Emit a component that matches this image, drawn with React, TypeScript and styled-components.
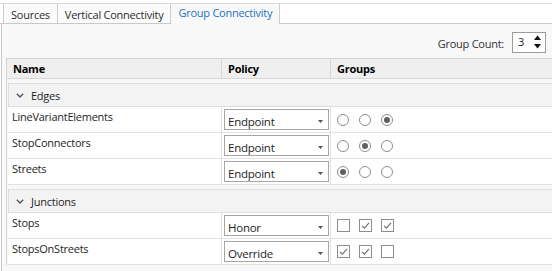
import React from 'react';
import styled, { createGlobalStyle, css } from 'styled-components';

type Kind = 'radio' | 'check';

interface ItemRow {
  name: string;
  policy: string;
  kind: Kind;
  values: boolean[];
}

interface Group {
  title: string;
  rows: ItemRow[];
}

const groups: Group[] = [
  {
    title: 'Edges',
    rows: [
      { name: 'LineVariantElements', policy: 'Endpoint', kind: 'radio', values: [false, false, true] },
      { name: 'StopConnectors', policy: 'Endpoint', kind: 'radio', values: [false, true, false] },
      { name: 'Streets', policy: 'Endpoint', kind: 'radio', values: [true, false, false] },
    ],
  },
  {
    title: 'Junctions',
    rows: [
      { name: 'Stops', policy: 'Honor', kind: 'check', values: [false, true, true] },
      { name: 'StopsOnStreets', policy: 'Override', kind: 'check', values: [true, true, false] },
    ],
  },
];

const GlobalStyle = createGlobalStyle`
  html, body {
    margin: 0;
    padding: 0;
    background: #ffffff;
  }
  body {
    font-family: "Open Sans", "Noto Sans", sans-serif;
    font-size: 11px;
    letter-spacing: -0.25px;
    color: #1e1e1e;
    overflow: hidden;
  }
`;

const Window = styled.div`
  width: 552px;
  height: 271px;
  display: flex;
  flex-direction: column;
  overflow: hidden;
`;

const TabBar = styled.div`
  margin-top: 3px;
  height: 21px;
  box-sizing: border-box;
  border-top: 1px solid #dcdcdc;
  border-bottom: 1px solid #c9c9c9;
  display: flex;
  padding-left: 3px;
  background: #ffffff;
`;

const Tab = styled.div<{ $active?: boolean }>`
  box-sizing: border-box;
  height: 19px;
  padding: 1px 7px 0 7px;
  line-height: 19px;
  border-right: 1px solid #cdcdcd;
  background: #fbfbfb;
  color: #2b2b2b;
  white-space: nowrap;

  &:first-child {
    border-left: 1px solid #cdcdcd;
  }

  ${({ $active }) =>
    $active &&
    css`
      height: 20px;
      margin-bottom: -1px;
      padding-top: 0;
      line-height: 17px;
      background: #f8f8f8;
      color: #1a72c4;
    `}
`;

const Panel = styled.div`
  flex: 1;
  margin-left: 1px;
  border-left: 1px solid #c9c9c9;
  background: #f8f8f8;
  display: flex;
  flex-direction: column;
  overflow: hidden;
`;

const Toolbar = styled.div`
  height: 34px;
  box-sizing: border-box;
  display: flex;
  justify-content: flex-end;
  align-items: flex-start;
  gap: 8px;
  padding: 8px 6px 0 0;
`;

const CountLabel = styled.span`
  line-height: 21px;
  padding-top: 1px;
  color: #333333;
`;

const Spinner = styled.div`
  width: 34px;
  height: 21px;
  box-sizing: border-box;
  border: 1px solid #9c9c9c;
  background: #ffffff;
  display: flex;
  align-items: center;
  justify-content: space-between;
  padding: 0 4px 2px 5px;
  color: #1e1e1e;
`;

const Grid = styled.div`
  margin-left: 4px;
  width: 600px;
  flex: none;
  border: 1px solid #d3d3d3;
  border-right: none;
  border-bottom: none;
  background: #f8f8f8;
`;

const HeaderRow = styled.div`
  display: flex;
  height: 19px;
  background: #efefef;
  border-bottom: 1px solid #d6d6d6;
`;

const HeaderCell = styled.div<{ $width?: number }>`
  box-sizing: border-box;
  ${({ $width }) => ($width ? `width: ${$width}px;` : 'flex: 1;')}
  padding: 1px 0 0 6px;
  line-height: 18px;
  border-right: 1px solid #d6d6d6;
  font-weight: 700;
  color: #000000;
`;

const Body = styled.div`
  padding-left: 1px;
`;

const GroupBlock = styled.div`
  margin-top: 4px;
`;

const GroupRow = styled.div`
  height: 24px;
  box-sizing: border-box;
  display: flex;
  align-items: center;
  gap: 7px;
  padding: 1px 0 0 7px;
  background: #f3f3f3;
  border: 1px solid #dedede;
`;

const DataRow = styled.div`
  display: flex;
  height: 26px;
  box-sizing: border-box;
  background: #ffffff;
  border-bottom: 1px solid #e2e2e2;
`;

const NameCell = styled.div`
  width: 214px;
  box-sizing: border-box;
  padding: 2px 0 0 4px;
  line-height: 16px;
  border-right: 1px solid #e2e2e2;
`;

const PolicyCell = styled.div`
  width: 109px;
  box-sizing: border-box;
  padding: 2px 0 0 2px;
  border-right: 1px solid #e2e2e2;
`;

const Select = styled.div`
  width: 105px;
  height: 21px;
  box-sizing: border-box;
  border: 1px solid #a6a6a6;
  background: #ffffff;
  display: flex;
  align-items: center;
  justify-content: space-between;
  padding: 3px 5px 0 3px;
  font-size: 11.5px;
`;

const GroupsCell = styled.div`
  display: flex;
  align-items: center;
  height: 21px;
  padding: 2px 0 0 1px;
`;

const Slot = styled.div`
  width: 22px;
  display: flex;
  justify-content: center;
  align-items: center;
`;

const Radio = styled.span<{ $on: boolean }>`
  width: 12px;
  height: 12px;
  box-sizing: border-box;
  border-radius: 50%;
  border: 1px solid #8e8e8e;
  background: #ffffff;
  display: flex;
  align-items: center;
  justify-content: center;

  &::after {
    content: '';
    width: 6px;
    height: 6px;
    border-radius: 50%;
    background: ${({ $on }) => ($on ? '#606060' : 'transparent')};
  }
`;

const Check = styled.span`
  width: 13px;
  height: 13px;
  box-sizing: border-box;
  border: 1px solid #8e8e8e;
  background: #ffffff;
  display: flex;
  align-items: center;
  justify-content: center;
`;

const Chevron = () => (
  <svg width="8" height="5" viewBox="0 0 8 5">
    <path d="M0.8 0.8 L4 4 L7.2 0.8" fill="none" stroke="#555" strokeWidth="1.4" />
  </svg>
);

const Caret = () => (
  <svg width="5" height="3" viewBox="0 0 5 3">
    <polygon points="0,0 5,0 2.5,3" fill="#555" />
  </svg>
);

const SpinArrows = () => (
  <svg width="7" height="14" viewBox="0 0 7 14">
    <polygon points="0,5 3.5,0.5 7,5" fill="#111" />
    <polygon points="0,9 7,9 3.5,13.5" fill="#111" />
  </svg>
);

const Tick = () => (
  <svg width="11" height="11" viewBox="0 0 11 11">
    <path d="M2 5.8 L4.4 8.2 L9 2.8" fill="none" stroke="#6e6e6e" strokeWidth="1.1" />
  </svg>
);

const App: React.FC = () => {
  return (
    <Window>
      <GlobalStyle />
      <TabBar>
        <Tab>Sources</Tab>
        <Tab>Vertical Connectivity</Tab>
        <Tab $active>Group Connectivity</Tab>
      </TabBar>
      <Panel>
        <Toolbar>
          <CountLabel>Group Count:</CountLabel>
          <Spinner>
            <span>3</span>
            <SpinArrows />
          </Spinner>
        </Toolbar>
        <Grid>
          <HeaderRow>
            <HeaderCell $width={215}>Name</HeaderCell>
            <HeaderCell $width={109}>Policy</HeaderCell>
            <HeaderCell>Groups</HeaderCell>
          </HeaderRow>
          <Body>
            {groups.map((g) => (
              <GroupBlock key={g.title}>
                <GroupRow>
                  <Chevron />
                  <span>{g.title}</span>
                </GroupRow>
                {g.rows.map((r) => (
                  <DataRow key={r.name}>
                    <NameCell>{r.name}</NameCell>
                    <PolicyCell>
                      <Select>
                        <span>{r.policy}</span>
                        <Caret />
                      </Select>
                    </PolicyCell>
                    <GroupsCell>
                      {r.values.map((v, i) => (
                        <Slot key={i}>
                          {r.kind === 'radio' ? (
                            <Radio $on={v} />
                          ) : (
                            <Check>{v && <Tick />}</Check>
                          )}
                        </Slot>
                      ))}
                    </GroupsCell>
                  </DataRow>
                ))}
              </GroupBlock>
            ))}
          </Body>
        </Grid>
      </Panel>
    </Window>
  );
};

export default App;
